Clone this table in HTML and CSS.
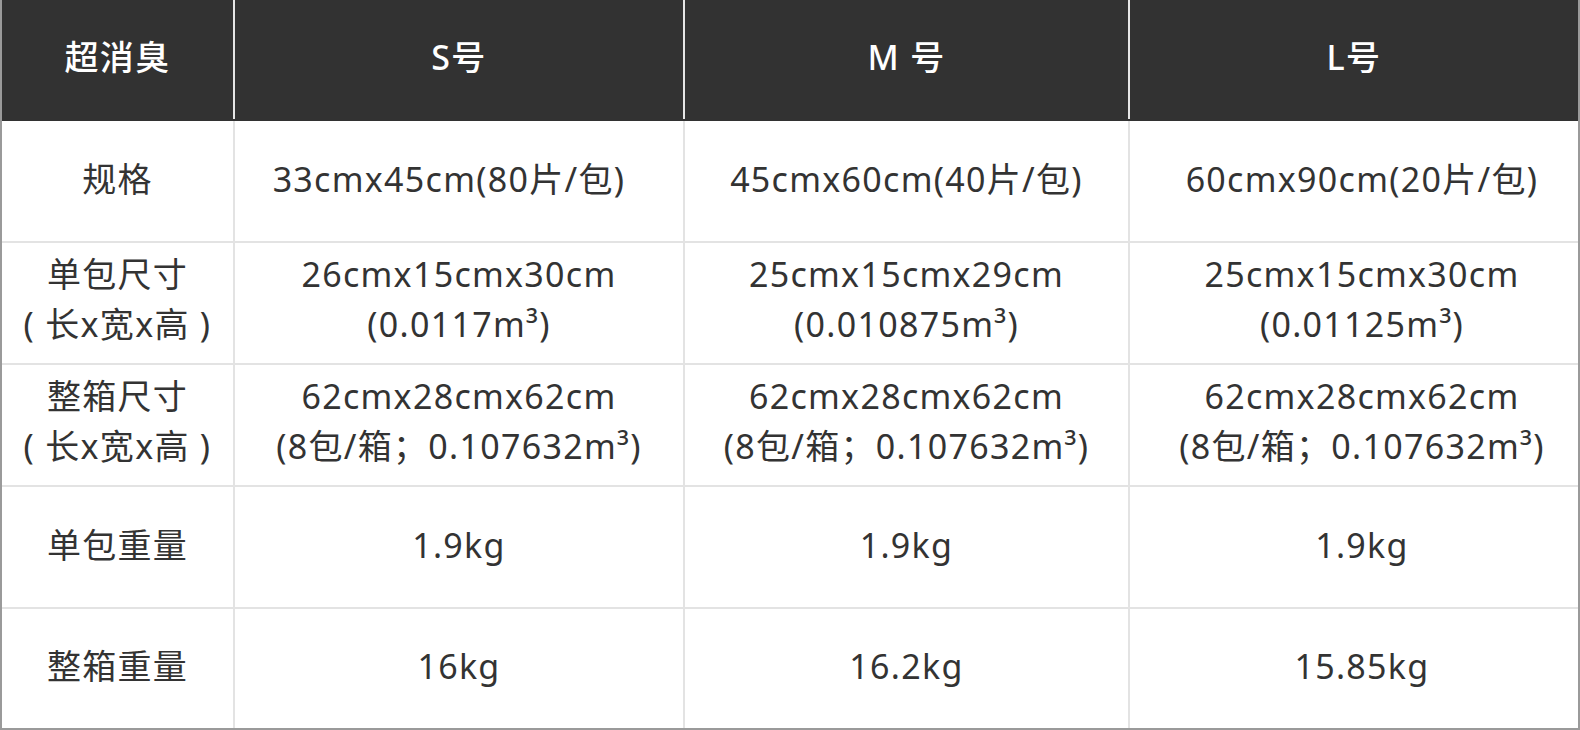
FILE: index.html
```html
<!DOCTYPE html>
<html lang="zh-CN">
<head>
<meta charset="utf-8">
<link rel="stylesheet" href="styles.css">
</head>
<body>
<div class="wrap">
<table class="spec">
<colgroup>
<col class="c1"><col class="c2"><col class="c3"><col class="c4">
</colgroup>
<thead>
<tr><th>超消臭</th><th>S号</th><th>M 号</th><th>L号</th></tr>
</thead>
<tbody>
<tr><td>规格</td><td class="nudge-left">33cmx45cm(80片/包)</td><td>45cmx60cm(40片/包)</td><td>60cmx90cm(20片/包)</td></tr>
<tr class="two"><td>单包尺寸<br>( 长x宽x高 )</td><td>26cmx15cmx30cm<br>(0.0117m³)</td><td>25cmx15cmx29cm<br>(0.010875m³)</td><td>25cmx15cmx30cm<br>(0.01125m³)</td></tr>
<tr class="two"><td>整箱尺寸<br>( 长x宽x高 )</td><td>62cmx28cmx62cm<br>(8包/箱；0.107632m³)</td><td>62cmx28cmx62cm<br>(8包/箱；0.107632m³)</td><td>62cmx28cmx62cm<br>(8包/箱；0.107632m³)</td></tr>
<tr><td>单包重量</td><td>1.9kg</td><td>1.9kg</td><td>1.9kg</td></tr>
<tr><td>整箱重量</td><td>16kg</td><td>16.2kg</td><td>15.85kg</td></tr>
</tbody>
</table>
</div>
</body>
</html>
```
FILE: styles.css
```css
html, body {
  margin: 0;
  padding: 0;
  background: #fff;
}
.wrap {
  width: 1580px;
  height: 730px;
  box-sizing: border-box;
  border: 2px solid #9a9a9a;
  border-top: none;
  overflow: hidden;
}
.spec {
  width: 1576px;
  border-collapse: collapse;
  table-layout: fixed;
  font-family: "Noto Sans", "Noto Sans CJK SC", sans-serif;
  font-size: 34px;
  letter-spacing: 1.3px;
  line-height: 50px;
  color: #333;
}
.c1 { width: 232px; }
.c2 { width: 450px; }
.c3 { width: 445px; }
.c4 { width: 449px; }
.spec th, .spec td {
  padding: 0 0 5px 0;
  text-align: center;
  vertical-align: middle;
  box-sizing: border-box;
}
.spec th {
  height: 120px;
  background: #323232;
  color: #fff;
  font-weight: 500;
  border-right: 2px solid #e6e6e6;
  border-bottom: 2px solid #323232;
}
.spec td {
  height: 122px;
  border-right: 2px solid #e3e3e3;
  border-bottom: 2px solid #e3e3e3;
}
.spec tr.two td {
  padding-bottom: 9px;
}
.spec th:last-child, .spec td:last-child {
  border-right: none;
}
.spec td:last-child {
  padding-left: 16px;
}
.spec td.nudge-left {
  padding-right: 20px;
}
.spec tbody tr:last-child td {
  border-bottom: none;
  height: 120px;
}
```
